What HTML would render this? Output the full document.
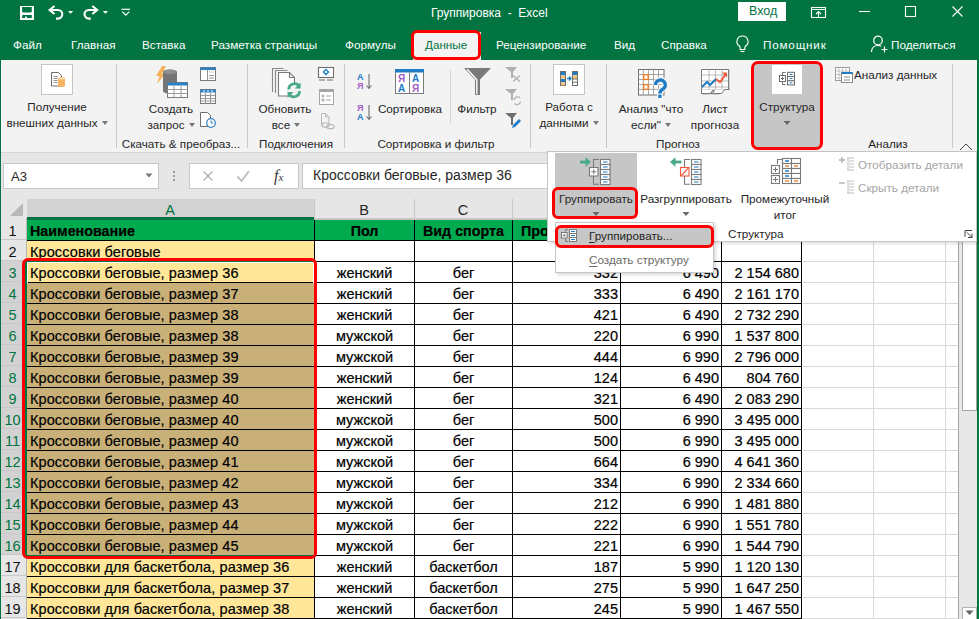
<!DOCTYPE html><html><head><meta charset="utf-8"><style>
*{box-sizing:border-box;margin:0;padding:0}
html,body{width:979px;height:619px;overflow:hidden;background:#fff;font-family:"Liberation Sans",sans-serif;}
.a{position:absolute}
.t{position:absolute;white-space:nowrap;line-height:1}
.rb{font-size:11.7px;color:#262626}
.c{font-size:14.5px;color:#000;line-height:20px;height:20px;white-space:nowrap;overflow:hidden;-webkit-text-stroke:0.2px #000}
</style></head><body>

<div class="a" style="left:0;top:0;width:979px;height:60px;background:#017441"></div>
<div class="t" style="left:431px;top:7px;font-size:12px;color:#fff">Группировка &nbsp;- &nbsp;Excel</div>
<div class="a" style="left:738px;top:2px;width:48px;height:19px;background:#fff"></div>
<div class="t" style="left:749px;top:5px;font-size:12.5px;color:#017441">Вход</div>
<div class="t" style="left:13px;top:39px;font-size:11.7px;color:#fff;">Файл</div>
<div class="t" style="left:71px;top:39px;font-size:11.7px;color:#fff;">Главная</div>
<div class="t" style="left:142px;top:39px;font-size:11.7px;color:#fff;">Вставка</div>
<div class="t" style="left:211px;top:39px;font-size:11.7px;color:#fff;">Разметка страницы</div>
<div class="t" style="left:345px;top:39px;font-size:11.7px;color:#fff;">Формулы</div>
<div class="t" style="left:496px;top:39px;font-size:11.7px;color:#fff;">Рецензирование</div>
<div class="t" style="left:614px;top:39px;font-size:11.7px;color:#fff;">Вид</div>
<div class="t" style="left:661px;top:39px;font-size:11.7px;color:#fff;">Справка</div>
<div class="t" style="left:763px;top:39px;font-size:11.7px;color:#fff;letter-spacing:0.8px;">Помощник</div>
<div class="t" style="left:891px;top:39px;font-size:11.7px;color:#fff;">Поделиться</div>
<div class="a" style="left:413px;top:32px;width:68px;height:28px;background:#f3f3f3"></div>
<div class="t" style="left:425px;top:39px;font-size:11.7px;color:#017441">Данные</div>
<div class="a" style="left:1px;top:60px;width:976px;height:92px;background:#f3f3f3"></div>
<div class="a" style="left:1px;top:152px;width:976px;height:1px;background:#d6d6d6"></div>
<div class="a" style="left:1px;top:153px;width:976px;height:66px;background:#e6e6e6"></div>
<div class="a" style="left:0;top:0;width:1px;height:619px;background:#017441"></div>
<div class="a" style="left:977px;top:0;width:2px;height:619px;background:#017441"></div>
<div class="a" style="left:1px;top:219px;width:957px;height:400px;background:#fff"></div>
<div class="a" style="left:1px;top:219px;width:25px;height:400px;background:#e6e6e6"></div>
<div class="a" style="left:1px;top:261px;width:25px;height:294px;background:#d2d2d2"></div>
<div class="a" style="left:26px;top:199px;width:932px;height:20px;background:#e6e6e6"></div>
<div class="a" style="left:27px;top:199px;width:287px;height:20px;background:#d2d2d2"></div>
<div class="a" style="left:27px;top:217px;width:287px;height:2px;background:#017441"></div>
<svg class="a" style="left:10px;top:203px" width="14" height="14"><polygon points="13,0 13,13 0,13" fill="#b8b8b8"/></svg>
<div class="a" style="left:314px;top:199px;width:1px;height:20px;background:#c8c8c8"></div>
<div class="a" style="left:414px;top:199px;width:1px;height:20px;background:#c8c8c8"></div>
<div class="a" style="left:512px;top:199px;width:1px;height:20px;background:#c8c8c8"></div>
<div class="a" style="left:620px;top:199px;width:1px;height:20px;background:#c8c8c8"></div>
<div class="a" style="left:721px;top:199px;width:1px;height:20px;background:#c8c8c8"></div>
<div class="a" style="left:801px;top:199px;width:1px;height:20px;background:#c8c8c8"></div>
<div class="a" style="left:873px;top:199px;width:1px;height:20px;background:#c8c8c8"></div>
<div class="a" style="left:945px;top:199px;width:1px;height:20px;background:#c8c8c8"></div>
<div class="a" style="left:958px;top:199px;width:1px;height:20px;background:#c8c8c8"></div>
<div class="a" style="left:26px;top:218px;width:932px;height:1px;background:#c8c8c8"></div>
<div class="a" style="left:27px;top:217px;width:287px;height:2px;background:#017441"></div>
<div class="t" style="left:150.0px;width:40px;text-align:center;top:203px;font-size:14.5px;color:#017441">A</div>
<div class="t" style="left:344.0px;width:40px;text-align:center;top:203px;font-size:14.5px;color:#262626">B</div>
<div class="t" style="left:443.0px;width:40px;text-align:center;top:203px;font-size:14.5px;color:#262626">C</div>
<div class="t" style="left:546.0px;width:40px;text-align:center;top:203px;font-size:14.5px;color:#262626">D</div>
<div class="t" style="left:650.5px;width:40px;text-align:center;top:203px;font-size:14.5px;color:#262626">E</div>
<div class="t" style="left:741.0px;width:40px;text-align:center;top:203px;font-size:14.5px;color:#262626">F</div>
<div class="t" style="left:817.0px;width:40px;text-align:center;top:203px;font-size:14.5px;color:#262626">G</div>
<div class="t" style="left:889.0px;width:40px;text-align:center;top:203px;font-size:14.5px;color:#262626">H</div>
<div class="t" style="left:931.5px;width:40px;text-align:center;top:203px;font-size:14.5px;color:#262626">I</div>
<div class="a" style="left:1px;top:239px;width:25px;height:1px;background:#c8c8c8"></div>
<div class="t" style="left:0px;width:25px;text-align:center;top:224px;font-size:14.5px;color:#111">1</div>
<div class="a" style="left:1px;top:260px;width:25px;height:1px;background:#c8c8c8"></div>
<div class="t" style="left:0px;width:25px;text-align:center;top:245px;font-size:14.5px;color:#111">2</div>
<div class="a" style="left:1px;top:281px;width:25px;height:1px;background:#c8c8c8"></div>
<div class="t" style="left:0px;width:25px;text-align:center;top:266px;font-size:14.5px;color:#017441">3</div>
<div class="a" style="left:1px;top:302px;width:25px;height:1px;background:#c8c8c8"></div>
<div class="t" style="left:0px;width:25px;text-align:center;top:287px;font-size:14.5px;color:#017441">4</div>
<div class="a" style="left:1px;top:323px;width:25px;height:1px;background:#c8c8c8"></div>
<div class="t" style="left:0px;width:25px;text-align:center;top:308px;font-size:14.5px;color:#017441">5</div>
<div class="a" style="left:1px;top:344px;width:25px;height:1px;background:#c8c8c8"></div>
<div class="t" style="left:0px;width:25px;text-align:center;top:329px;font-size:14.5px;color:#017441">6</div>
<div class="a" style="left:1px;top:365px;width:25px;height:1px;background:#c8c8c8"></div>
<div class="t" style="left:0px;width:25px;text-align:center;top:350px;font-size:14.5px;color:#017441">7</div>
<div class="a" style="left:1px;top:386px;width:25px;height:1px;background:#c8c8c8"></div>
<div class="t" style="left:0px;width:25px;text-align:center;top:371px;font-size:14.5px;color:#017441">8</div>
<div class="a" style="left:1px;top:407px;width:25px;height:1px;background:#c8c8c8"></div>
<div class="t" style="left:0px;width:25px;text-align:center;top:392px;font-size:14.5px;color:#017441">9</div>
<div class="a" style="left:1px;top:428px;width:25px;height:1px;background:#c8c8c8"></div>
<div class="t" style="left:0px;width:25px;text-align:center;top:413px;font-size:14.5px;color:#017441">10</div>
<div class="a" style="left:1px;top:449px;width:25px;height:1px;background:#c8c8c8"></div>
<div class="t" style="left:0px;width:25px;text-align:center;top:434px;font-size:14.5px;color:#017441">11</div>
<div class="a" style="left:1px;top:470px;width:25px;height:1px;background:#c8c8c8"></div>
<div class="t" style="left:0px;width:25px;text-align:center;top:455px;font-size:14.5px;color:#017441">12</div>
<div class="a" style="left:1px;top:491px;width:25px;height:1px;background:#c8c8c8"></div>
<div class="t" style="left:0px;width:25px;text-align:center;top:476px;font-size:14.5px;color:#017441">13</div>
<div class="a" style="left:1px;top:512px;width:25px;height:1px;background:#c8c8c8"></div>
<div class="t" style="left:0px;width:25px;text-align:center;top:497px;font-size:14.5px;color:#017441">14</div>
<div class="a" style="left:1px;top:533px;width:25px;height:1px;background:#c8c8c8"></div>
<div class="t" style="left:0px;width:25px;text-align:center;top:518px;font-size:14.5px;color:#017441">15</div>
<div class="a" style="left:1px;top:554px;width:25px;height:1px;background:#c8c8c8"></div>
<div class="t" style="left:0px;width:25px;text-align:center;top:539px;font-size:14.5px;color:#017441">16</div>
<div class="a" style="left:1px;top:575px;width:25px;height:1px;background:#c8c8c8"></div>
<div class="t" style="left:0px;width:25px;text-align:center;top:560px;font-size:14.5px;color:#111">17</div>
<div class="a" style="left:1px;top:596px;width:25px;height:1px;background:#c8c8c8"></div>
<div class="t" style="left:0px;width:25px;text-align:center;top:581px;font-size:14.5px;color:#111">18</div>
<div class="a" style="left:1px;top:617px;width:25px;height:1px;background:#c8c8c8"></div>
<div class="t" style="left:0px;width:25px;text-align:center;top:602px;font-size:14.5px;color:#111">19</div>
<div class="a" style="left:26px;top:219px;width:1px;height:400px;background:#c8c8c8"></div>
<div class="a" style="left:801px;top:240px;width:157px;height:1px;background:#d9d9d9"></div>
<div class="a" style="left:801px;top:261px;width:157px;height:1px;background:#d9d9d9"></div>
<div class="a" style="left:801px;top:282px;width:157px;height:1px;background:#d9d9d9"></div>
<div class="a" style="left:801px;top:303px;width:157px;height:1px;background:#d9d9d9"></div>
<div class="a" style="left:801px;top:324px;width:157px;height:1px;background:#d9d9d9"></div>
<div class="a" style="left:801px;top:345px;width:157px;height:1px;background:#d9d9d9"></div>
<div class="a" style="left:801px;top:366px;width:157px;height:1px;background:#d9d9d9"></div>
<div class="a" style="left:801px;top:387px;width:157px;height:1px;background:#d9d9d9"></div>
<div class="a" style="left:801px;top:408px;width:157px;height:1px;background:#d9d9d9"></div>
<div class="a" style="left:801px;top:429px;width:157px;height:1px;background:#d9d9d9"></div>
<div class="a" style="left:801px;top:450px;width:157px;height:1px;background:#d9d9d9"></div>
<div class="a" style="left:801px;top:471px;width:157px;height:1px;background:#d9d9d9"></div>
<div class="a" style="left:801px;top:492px;width:157px;height:1px;background:#d9d9d9"></div>
<div class="a" style="left:801px;top:513px;width:157px;height:1px;background:#d9d9d9"></div>
<div class="a" style="left:801px;top:534px;width:157px;height:1px;background:#d9d9d9"></div>
<div class="a" style="left:801px;top:555px;width:157px;height:1px;background:#d9d9d9"></div>
<div class="a" style="left:801px;top:576px;width:157px;height:1px;background:#d9d9d9"></div>
<div class="a" style="left:801px;top:597px;width:157px;height:1px;background:#d9d9d9"></div>
<div class="a" style="left:801px;top:618px;width:157px;height:1px;background:#d9d9d9"></div>
<div class="a" style="left:873px;top:219px;width:1px;height:400px;background:#d9d9d9"></div>
<div class="a" style="left:945px;top:219px;width:1px;height:400px;background:#d9d9d9"></div>
<div class="a" style="left:958px;top:199px;width:1px;height:420px;background:#a6a6a6"></div>
<div class="a" style="left:27px;top:219px;width:774px;height:21px;background:#00ab4f"></div>
<div class="a c" style="left:30px;top:221px;width:283px;font-weight:bold;font-size:14.3px">Наименование</div>
<div class="a c" style="left:315px;top:221px;width:99px;font-weight:bold;text-align:center;font-size:14.3px">Пол</div>
<div class="a c" style="left:415px;top:221px;width:97px;font-weight:bold;text-align:center;font-size:14.3px">Вид спорта</div>
<div class="a c" style="left:521px;top:221px;width:98px;font-weight:bold;font-size:14.3px">Продано, шт</div>
<div class="a c" style="left:621px;top:221px;width:100px;font-weight:bold;text-align:center;font-size:14.3px">Цена</div>
<div class="a c" style="left:722px;top:221px;width:79px;font-weight:bold;text-align:center;font-size:14.3px">Сумма</div>
<div class="a" style="left:27px;top:241px;width:287px;height:20px;background:#ffe699"></div>
<div class="a c" style="left:30px;top:242px;width:283px;letter-spacing:0.1px">Кроссовки беговые</div>
<div class="a" style="left:27px;top:262px;width:287px;height:20px;background:#ffe699"></div>
<div class="a c" style="left:30px;top:263px;width:283px;letter-spacing:0.1px">Кроссовки беговые, размер 36</div>
<div class="a c" style="left:315px;top:263px;width:99px;text-align:center">женский</div>
<div class="a c" style="left:415px;top:263px;width:97px;text-align:center">бег</div>
<div class="a c" style="left:513px;top:263px;width:105px;text-align:right">332</div>
<div class="a c" style="left:621px;top:263px;width:98px;text-align:right">6 490</div>
<div class="a c" style="left:722px;top:263px;width:77px;text-align:right">2 154 680</div>
<div class="a" style="left:27px;top:283px;width:287px;height:20px;background:#c9b079"></div>
<div class="a c" style="left:30px;top:284px;width:283px;letter-spacing:0.1px">Кроссовки беговые, размер 37</div>
<div class="a c" style="left:315px;top:284px;width:99px;text-align:center">женский</div>
<div class="a c" style="left:415px;top:284px;width:97px;text-align:center">бег</div>
<div class="a c" style="left:513px;top:284px;width:105px;text-align:right">333</div>
<div class="a c" style="left:621px;top:284px;width:98px;text-align:right">6 490</div>
<div class="a c" style="left:722px;top:284px;width:77px;text-align:right">2 161 170</div>
<div class="a" style="left:27px;top:304px;width:287px;height:20px;background:#c9b079"></div>
<div class="a c" style="left:30px;top:305px;width:283px;letter-spacing:0.1px">Кроссовки беговые, размер 38</div>
<div class="a c" style="left:315px;top:305px;width:99px;text-align:center">женский</div>
<div class="a c" style="left:415px;top:305px;width:97px;text-align:center">бег</div>
<div class="a c" style="left:513px;top:305px;width:105px;text-align:right">421</div>
<div class="a c" style="left:621px;top:305px;width:98px;text-align:right">6 490</div>
<div class="a c" style="left:722px;top:305px;width:77px;text-align:right">2 732 290</div>
<div class="a" style="left:27px;top:325px;width:287px;height:20px;background:#c9b079"></div>
<div class="a c" style="left:30px;top:326px;width:283px;letter-spacing:0.1px">Кроссовки беговые, размер 38</div>
<div class="a c" style="left:315px;top:326px;width:99px;text-align:center">мужской</div>
<div class="a c" style="left:415px;top:326px;width:97px;text-align:center">бег</div>
<div class="a c" style="left:513px;top:326px;width:105px;text-align:right">220</div>
<div class="a c" style="left:621px;top:326px;width:98px;text-align:right">6 990</div>
<div class="a c" style="left:722px;top:326px;width:77px;text-align:right">1 537 800</div>
<div class="a" style="left:27px;top:346px;width:287px;height:20px;background:#c9b079"></div>
<div class="a c" style="left:30px;top:347px;width:283px;letter-spacing:0.1px">Кроссовки беговые, размер 39</div>
<div class="a c" style="left:315px;top:347px;width:99px;text-align:center">мужской</div>
<div class="a c" style="left:415px;top:347px;width:97px;text-align:center">бег</div>
<div class="a c" style="left:513px;top:347px;width:105px;text-align:right">444</div>
<div class="a c" style="left:621px;top:347px;width:98px;text-align:right">6 990</div>
<div class="a c" style="left:722px;top:347px;width:77px;text-align:right">2 796 000</div>
<div class="a" style="left:27px;top:367px;width:287px;height:20px;background:#c9b079"></div>
<div class="a c" style="left:30px;top:368px;width:283px;letter-spacing:0.1px">Кроссовки беговые, размер 39</div>
<div class="a c" style="left:315px;top:368px;width:99px;text-align:center">женский</div>
<div class="a c" style="left:415px;top:368px;width:97px;text-align:center">бег</div>
<div class="a c" style="left:513px;top:368px;width:105px;text-align:right">124</div>
<div class="a c" style="left:621px;top:368px;width:98px;text-align:right">6 490</div>
<div class="a c" style="left:722px;top:368px;width:77px;text-align:right">804 760</div>
<div class="a" style="left:27px;top:388px;width:287px;height:20px;background:#c9b079"></div>
<div class="a c" style="left:30px;top:389px;width:283px;letter-spacing:0.1px">Кроссовки беговые, размер 40</div>
<div class="a c" style="left:315px;top:389px;width:99px;text-align:center">женский</div>
<div class="a c" style="left:415px;top:389px;width:97px;text-align:center">бег</div>
<div class="a c" style="left:513px;top:389px;width:105px;text-align:right">321</div>
<div class="a c" style="left:621px;top:389px;width:98px;text-align:right">6 490</div>
<div class="a c" style="left:722px;top:389px;width:77px;text-align:right">2 083 290</div>
<div class="a" style="left:27px;top:409px;width:287px;height:20px;background:#c9b079"></div>
<div class="a c" style="left:30px;top:410px;width:283px;letter-spacing:0.1px">Кроссовки беговые, размер 40</div>
<div class="a c" style="left:315px;top:410px;width:99px;text-align:center">мужской</div>
<div class="a c" style="left:415px;top:410px;width:97px;text-align:center">бег</div>
<div class="a c" style="left:513px;top:410px;width:105px;text-align:right">500</div>
<div class="a c" style="left:621px;top:410px;width:98px;text-align:right">6 990</div>
<div class="a c" style="left:722px;top:410px;width:77px;text-align:right">3 495 000</div>
<div class="a" style="left:27px;top:430px;width:287px;height:20px;background:#c9b079"></div>
<div class="a c" style="left:30px;top:431px;width:283px;letter-spacing:0.1px">Кроссовки беговые, размер 40</div>
<div class="a c" style="left:315px;top:431px;width:99px;text-align:center">мужской</div>
<div class="a c" style="left:415px;top:431px;width:97px;text-align:center">бег</div>
<div class="a c" style="left:513px;top:431px;width:105px;text-align:right">500</div>
<div class="a c" style="left:621px;top:431px;width:98px;text-align:right">6 990</div>
<div class="a c" style="left:722px;top:431px;width:77px;text-align:right">3 495 000</div>
<div class="a" style="left:27px;top:451px;width:287px;height:20px;background:#c9b079"></div>
<div class="a c" style="left:30px;top:452px;width:283px;letter-spacing:0.1px">Кроссовки беговые, размер 41</div>
<div class="a c" style="left:315px;top:452px;width:99px;text-align:center">мужской</div>
<div class="a c" style="left:415px;top:452px;width:97px;text-align:center">бег</div>
<div class="a c" style="left:513px;top:452px;width:105px;text-align:right">664</div>
<div class="a c" style="left:621px;top:452px;width:98px;text-align:right">6 990</div>
<div class="a c" style="left:722px;top:452px;width:77px;text-align:right">4 641 360</div>
<div class="a" style="left:27px;top:472px;width:287px;height:20px;background:#c9b079"></div>
<div class="a c" style="left:30px;top:473px;width:283px;letter-spacing:0.1px">Кроссовки беговые, размер 42</div>
<div class="a c" style="left:315px;top:473px;width:99px;text-align:center">мужской</div>
<div class="a c" style="left:415px;top:473px;width:97px;text-align:center">бег</div>
<div class="a c" style="left:513px;top:473px;width:105px;text-align:right">334</div>
<div class="a c" style="left:621px;top:473px;width:98px;text-align:right">6 990</div>
<div class="a c" style="left:722px;top:473px;width:77px;text-align:right">2 334 660</div>
<div class="a" style="left:27px;top:493px;width:287px;height:20px;background:#c9b079"></div>
<div class="a c" style="left:30px;top:494px;width:283px;letter-spacing:0.1px">Кроссовки беговые, размер 43</div>
<div class="a c" style="left:315px;top:494px;width:99px;text-align:center">мужской</div>
<div class="a c" style="left:415px;top:494px;width:97px;text-align:center">бег</div>
<div class="a c" style="left:513px;top:494px;width:105px;text-align:right">212</div>
<div class="a c" style="left:621px;top:494px;width:98px;text-align:right">6 990</div>
<div class="a c" style="left:722px;top:494px;width:77px;text-align:right">1 481 880</div>
<div class="a" style="left:27px;top:514px;width:287px;height:20px;background:#c9b079"></div>
<div class="a c" style="left:30px;top:515px;width:283px;letter-spacing:0.1px">Кроссовки беговые, размер 44</div>
<div class="a c" style="left:315px;top:515px;width:99px;text-align:center">мужской</div>
<div class="a c" style="left:415px;top:515px;width:97px;text-align:center">бег</div>
<div class="a c" style="left:513px;top:515px;width:105px;text-align:right">222</div>
<div class="a c" style="left:621px;top:515px;width:98px;text-align:right">6 990</div>
<div class="a c" style="left:722px;top:515px;width:77px;text-align:right">1 551 780</div>
<div class="a" style="left:27px;top:535px;width:287px;height:20px;background:#c9b079"></div>
<div class="a c" style="left:30px;top:536px;width:283px;letter-spacing:0.1px">Кроссовки беговые, размер 45</div>
<div class="a c" style="left:315px;top:536px;width:99px;text-align:center">мужской</div>
<div class="a c" style="left:415px;top:536px;width:97px;text-align:center">бег</div>
<div class="a c" style="left:513px;top:536px;width:105px;text-align:right">221</div>
<div class="a c" style="left:621px;top:536px;width:98px;text-align:right">6 990</div>
<div class="a c" style="left:722px;top:536px;width:77px;text-align:right">1 544 790</div>
<div class="a" style="left:27px;top:556px;width:287px;height:20px;background:#ffe699"></div>
<div class="a c" style="left:30px;top:557px;width:283px;letter-spacing:0.1px">Кроссовки для баскетбола, размер 36</div>
<div class="a c" style="left:315px;top:557px;width:99px;text-align:center">женский</div>
<div class="a c" style="left:415px;top:557px;width:97px;text-align:center">баскетбол</div>
<div class="a c" style="left:513px;top:557px;width:105px;text-align:right">187</div>
<div class="a c" style="left:621px;top:557px;width:98px;text-align:right">5 990</div>
<div class="a c" style="left:722px;top:557px;width:77px;text-align:right">1 120 130</div>
<div class="a" style="left:27px;top:577px;width:287px;height:20px;background:#ffe699"></div>
<div class="a c" style="left:30px;top:578px;width:283px;letter-spacing:0.1px">Кроссовки для баскетбола, размер 37</div>
<div class="a c" style="left:315px;top:578px;width:99px;text-align:center">женский</div>
<div class="a c" style="left:415px;top:578px;width:97px;text-align:center">баскетбол</div>
<div class="a c" style="left:513px;top:578px;width:105px;text-align:right">275</div>
<div class="a c" style="left:621px;top:578px;width:98px;text-align:right">5 990</div>
<div class="a c" style="left:722px;top:578px;width:77px;text-align:right">1 647 250</div>
<div class="a" style="left:27px;top:598px;width:287px;height:20px;background:#ffe699"></div>
<div class="a c" style="left:30px;top:599px;width:283px;letter-spacing:0.1px">Кроссовки для баскетбола, размер 38</div>
<div class="a c" style="left:315px;top:599px;width:99px;text-align:center">женский</div>
<div class="a c" style="left:415px;top:599px;width:97px;text-align:center">баскетбол</div>
<div class="a c" style="left:513px;top:599px;width:105px;text-align:right">245</div>
<div class="a c" style="left:621px;top:599px;width:98px;text-align:right">5 990</div>
<div class="a c" style="left:722px;top:599px;width:77px;text-align:right">1 467 550</div>
<div class="a" style="left:27px;top:240px;width:775px;height:1px;background:#000"></div>
<div class="a" style="left:27px;top:261px;width:775px;height:1px;background:#000"></div>
<div class="a" style="left:27px;top:282px;width:775px;height:1px;background:#000"></div>
<div class="a" style="left:27px;top:303px;width:775px;height:1px;background:#000"></div>
<div class="a" style="left:27px;top:324px;width:775px;height:1px;background:#000"></div>
<div class="a" style="left:27px;top:345px;width:775px;height:1px;background:#000"></div>
<div class="a" style="left:27px;top:366px;width:775px;height:1px;background:#000"></div>
<div class="a" style="left:27px;top:387px;width:775px;height:1px;background:#000"></div>
<div class="a" style="left:27px;top:408px;width:775px;height:1px;background:#000"></div>
<div class="a" style="left:27px;top:429px;width:775px;height:1px;background:#000"></div>
<div class="a" style="left:27px;top:450px;width:775px;height:1px;background:#000"></div>
<div class="a" style="left:27px;top:471px;width:775px;height:1px;background:#000"></div>
<div class="a" style="left:27px;top:492px;width:775px;height:1px;background:#000"></div>
<div class="a" style="left:27px;top:513px;width:775px;height:1px;background:#000"></div>
<div class="a" style="left:27px;top:534px;width:775px;height:1px;background:#000"></div>
<div class="a" style="left:27px;top:555px;width:775px;height:1px;background:#000"></div>
<div class="a" style="left:27px;top:576px;width:775px;height:1px;background:#000"></div>
<div class="a" style="left:27px;top:597px;width:775px;height:1px;background:#000"></div>
<div class="a" style="left:27px;top:618px;width:775px;height:1px;background:#000"></div>
<div class="a" style="left:26px;top:219px;width:932px;height:1px;background:#c4c0c0"></div>
<div class="a" style="left:27px;top:218px;width:287px;height:2px;background:#017441"></div>
<div class="a" style="left:26px;top:219px;width:1px;height:400px;background:#b4b4b4"></div>
<div class="a" style="left:314px;top:220px;width:1px;height:399px;background:#000"></div>
<div class="a" style="left:414px;top:220px;width:1px;height:399px;background:#000"></div>
<div class="a" style="left:512px;top:220px;width:1px;height:399px;background:#000"></div>
<div class="a" style="left:620px;top:220px;width:1px;height:399px;background:#000"></div>
<div class="a" style="left:721px;top:220px;width:1px;height:399px;background:#000"></div>
<div class="a" style="left:801px;top:220px;width:1px;height:399px;background:#000"></div>
<div class="a" style="left:25px;top:260px;width:291px;height:297px;border:2px solid #017441"></div>
<div class="a" style="left:27px;top:262px;width:287px;height:21px;border:1px solid #fff;border-bottom:none"></div>
<div class="a" style="left:22px;top:258px;width:295px;height:301px;border:3px solid #ff0000;border-radius:6px"></div>
<div class="a" style="left:959px;top:199px;width:18px;height:420px;background:#e8e8e8"></div>
<div class="a" style="left:962px;top:231px;width:15px;height:180px;background:#fff;border:1px solid #a6a6a6"></div>
<div class="a" style="left:962px;top:607px;width:15px;height:12px;background:#fff;border:1px solid #b4b4b4;border-bottom:none"></div>
<svg class="a" style="left:964px;top:609px" width="12" height="8"><polygon points="1.5,1.5 9.5,1.5 5.5,6" fill="#666"/></svg>
<div class="a" style="left:3px;top:163px;width:156px;height:26px;background:#fff;border:1px solid #c6c6c6"></div>
<div class="t" style="left:11px;top:170px;font-size:13px;color:#262626">A3</div>
<svg class="a" style="left:145px;top:173px" width="9" height="6"><polygon points="0.5,0.5 7.5,0.5 4,4.5" fill="#777"/></svg>
<svg class="a" style="left:172px;top:170px" width="5" height="12"><rect x="1" y="1" width="2" height="2" fill="#9a9a9a"/><rect x="1" y="5" width="2" height="2" fill="#9a9a9a"/><rect x="1" y="9" width="2" height="2" fill="#9a9a9a"/></svg>
<div class="a" style="left:189px;top:163px;width:110px;height:26px;background:#fff;border:1px solid #c6c6c6"></div>
<svg class="a" style="left:202px;top:170px" width="13" height="13"><path d="M1.5 1.5l9 9M10.5 1.5l-9 9" stroke="#b0b0b0" stroke-width="1.3"/></svg>
<svg class="a" style="left:236px;top:169px" width="15" height="14"><path d="M1.5 7.5l4 4.5L13 2" fill="none" stroke="#c0c0c0" stroke-width="2"/></svg>
<div class="t" style="left:274px;top:168px;font-size:16px;color:#3a3a3a;font-family:'Liberation Serif',serif;font-style:italic">f<span style="font-size:11px">x</span></div>
<div class="a" style="left:302px;top:163px;width:660px;height:26px;background:#fff;border:1px solid #c6c6c6"></div>
<div class="t" style="left:313px;top:168px;font-size:14px;color:#262626">Кроссовки беговые, размер 36</div>
<svg class="a" style="left:0px;top:0px" width="140" height="28" viewBox="0 0 140 28"><rect x="20" y="6" width="14" height="14" fill="#fff"/><path d="M22.1 7.1h9.7v4.4l-1 1.1h-7.7l-1-1.1z" fill="#017441"/><rect x="22.2" y="15" width="9.6" height="3.1" fill="#017441"/><rect x="25" y="16.6" width="2" height="1.6" fill="#fff"/><path d="M49.5 10H58A4.3 4.3 0 0 1 58 18.6H56" fill="none" stroke="#fff" stroke-width="2.1"/><path d="M54.5 6L49.6 10L54.5 14" fill="none" stroke="#fff" stroke-width="2.1"/><path d="M68 11h5.2l-2.6 2.8z" fill="#fff"/><path d="M97.3 10H88.8A4.3 4.3 0 0 0 88.8 18.6H90.8" fill="none" stroke="#fff" stroke-width="2.1"/><path d="M92.3 6L97.2 10L92.3 14" fill="none" stroke="#fff" stroke-width="2.1"/><path d="M102.8 11h5.2l-2.6 2.8z" fill="#fff"/><path d="M121.5 9.3h8.5" stroke="#fff" stroke-width="1.2"/><path d="M122.3 11.6l3.5 3.6 3.5-3.6" fill="none" stroke="#fff" stroke-width="1.2"/></svg>
<svg class="a" style="left:810px;top:5px" width="18" height="14" viewBox="0 0 18 14"><rect x="1.5" y="2.5" width="14" height="10" fill="none" stroke="#fff" stroke-width="1.1"/><path d="M1.5 4.5h14" stroke="#fff" stroke-width="1"/><path d="M8.5 12V6.5M6 9l2.5-2.5L11 9" fill="none" stroke="#fff" stroke-width="1.1"/></svg>
<svg class="a" style="left:858px;top:5px" width="14" height="14" viewBox="0 0 14 14"><path d="M1 6.5h11" stroke="#fff" stroke-width="1.1"/></svg>
<svg class="a" style="left:904px;top:5px" width="14" height="14" viewBox="0 0 14 14"><rect x="1.5" y="1.5" width="10" height="10" fill="none" stroke="#fff" stroke-width="1.1"/></svg>
<svg class="a" style="left:951px;top:5px" width="14" height="14" viewBox="0 0 14 14"><path d="M1.5 1.5l10 10M11.5 1.5l-10 10" stroke="#fff" stroke-width="1.1"/></svg>
<svg class="a" style="left:734px;top:34px" width="18" height="20" viewBox="0 0 18 20"><path d="M8.5 2a5.5 5.5 0 0 0-3.2 10c.6.5.9 1.2.9 2v1.5h4.6V14c0-.8.3-1.5.9-2A5.5 5.5 0 0 0 8.5 2z" fill="none" stroke="#fff" stroke-width="1.1"/><path d="M6.5 17.5h4" stroke="#fff" stroke-width="1.1"/></svg>
<svg class="a" style="left:870px;top:34px" width="20" height="20" viewBox="0 0 20 20"><circle cx="8" cy="6.5" r="4.3" fill="none" stroke="#fff" stroke-width="1.2"/><path d="M1.5 18c0-4 2.7-6.5 6.5-6.5 1.3 0 2.4.3 3.3.8" fill="none" stroke="#fff" stroke-width="1.2"/><path d="M14.5 12.5v6M11.5 15.5h6" stroke="#fff" stroke-width="1.2"/></svg>
<div class="a" style="left:116px;top:64px;width:1px;height:84px;background:#c8c8c8"></div>
<div class="a" style="left:247px;top:64px;width:1px;height:84px;background:#c8c8c8"></div>
<div class="a" style="left:344px;top:64px;width:1px;height:84px;background:#c8c8c8"></div>
<div class="a" style="left:530px;top:64px;width:1px;height:84px;background:#c8c8c8"></div>
<div class="a" style="left:952px;top:64px;width:1px;height:84px;background:#c8c8c8"></div>
<div class="a" style="left:450px;top:70px;width:1px;height:54px;background:#d4d4d4"></div>
<div class="a" style="left:606px;top:64px;width:1px;height:84px;background:#c8c8c8"></div>
<div class="a" style="left:41px;top:64px;width:32px;height:31px;background:#fff;border:1px solid #c6c6c6"></div>
<svg class="a" style="left:49px;top:70px" width="20" height="20" viewBox="0 0 20 20"><path d="M2.5 2.5h7l3 3v10.5h-10z" fill="#fff" stroke="#6d6d6d" stroke-width="1"/><path d="M4.5 6.5h4M4.5 8.5h4M4.5 10.5h4M4.5 12.5h4" stroke="#8a8a8a" stroke-width="0.9"/><path d="M9 8.5c0-1 1.6-1.6 3.5-1.6s3.5.6 3.5 1.6v7c0 1-1.6 1.6-3.5 1.6S9 16.5 9 15.5z" fill="#f5b562"/><ellipse cx="12.5" cy="8.5" rx="3.2" ry="1" fill="#fde0b8"/></svg>
<div class="t" style="left:-23.0px;width:160px;text-align:center;top:101px;font-size:11.7px;color:#262626;">Получение</div>
<div class="t" style="left:-13.0px;width:140px;text-align:center;top:117px;font-size:11.7px;color:#262626;">внешних данных<span style="display:inline-block;width:0;height:0;border-left:3.5px solid transparent;border-right:3.5px solid transparent;border-top:4px solid #777;vertical-align:middle;margin-left:4px;margin-top:-2px"></span></div>
<svg class="a" style="left:154px;top:65px" width="36" height="34" viewBox="0 0 36 34"><path d="M8 1h4L8 9h3L3 19l2.5-8H2z" fill="#f5b25a"/><path d="M9 7c0-1.5 3-2.6 7-2.6s7 1.1 7 2.6v19c0 1.5-3 2.6-7 2.6S9 27.5 9 26z" fill="#757575"/><ellipse cx="16" cy="7" rx="7" ry="2.2" fill="#8f8f8f"/><rect x="13.5" y="17.5" width="20" height="15" fill="#fff" stroke="#7a7a7a" stroke-width="1"/><rect x="13.5" y="17.5" width="20" height="3" fill="#2e7fc1"/><path d="M13.5 24.5h20M13.5 28.5h20M20 20.5v12M27 20.5v12" stroke="#9a9a9a" stroke-width="1"/></svg>
<div class="t" style="left:91.0px;width:160px;text-align:center;top:103px;font-size:11.7px;color:#262626;">Создать</div>
<div class="t" style="left:91.0px;width:160px;text-align:center;top:119px;font-size:11.7px;color:#262626;">запрос<span style="display:inline-block;width:0;height:0;border-left:3.5px solid transparent;border-right:3.5px solid transparent;border-top:4px solid #777;vertical-align:middle;margin-left:4px;margin-top:-2px"></span></div>
<svg class="a" style="left:199px;top:66px" width="18" height="16" viewBox="0 0 18 16"><rect x="1.5" y="1.5" width="15" height="13" fill="#fff" stroke="#7a7a7a"/><rect x="1.5" y="1.5" width="15" height="2.5" fill="#2e7fc1"/><path d="M8.5 4v10.5M10 9.5h5M10 12h5" stroke="#8a8a8a" stroke-width="0.9"/><path d="M10 6h1M12 6h1M14 6h1" stroke="#999" stroke-width="0.9"/></svg>
<svg class="a" style="left:199px;top:88px" width="18" height="17" viewBox="0 0 18 17"><rect x="1.5" y="1.5" width="15" height="14" fill="#fff" stroke="#7a7a7a"/><rect x="1.5" y="1.5" width="15" height="3" fill="#2e7fc1"/><path d="M4 3h2M8 3h2M12 3h2" stroke="#fff" stroke-width="1"/><path d="M1.5 7.5h15M1.5 10.5h15M1.5 13h15M6.5 4.5v11M11.5 4.5v11" stroke="#8f8f8f" stroke-width="0.9"/></svg>
<svg class="a" style="left:199px;top:111px" width="18" height="17" viewBox="0 0 18 17"><path d="M1.5 1.5h7l3 3v11h-10z" fill="#fff" stroke="#6d6d6d"/><circle cx="12" cy="12" r="4.3" fill="#fff" stroke="#2e7fc1" stroke-width="1.2"/><path d="M12 9.5V12h2" fill="none" stroke="#2e7fc1" stroke-width="1"/></svg>
<div class="t" style="left:101.0px;width:160px;text-align:center;top:138px;font-size:11.7px;color:#262626;">Скачать &amp; преобраз...</div>
<svg class="a" style="left:265px;top:62px" width="40" height="40" viewBox="0 0 40 40"><path d="M7.5 30V6.5h11" fill="none" stroke="#8a8a8a" stroke-width="1.1"/><path d="M10.5 31V8.5h12" fill="none" stroke="#8a8a8a" stroke-width="1.1"/><path d="M13.5 10.5h11l5 5V34h-16z" fill="#fff" stroke="#7a7a7a" stroke-width="1.1"/><path d="M24.5 10.5v5h5" fill="none" stroke="#7a7a7a" stroke-width="1.1"/><circle cx="29.2" cy="29" r="7.8" fill="#f3f3f3"/><g fill="none" stroke="#4aa98c" stroke-width="2.8"><path d="M23.8 27.5a5.6 5.6 0 0 1 10.3-3.2"/><path d="M34.5 29a5.6 5.6 0 0 1-10.3 3.2"/></g><path d="M35.6 20.6v6h-6z" fill="#4aa98c"/><path d="M22.6 36v-6h6z" fill="#4aa98c"/></svg>
<div class="t" style="left:205.0px;width:160px;text-align:center;top:103px;font-size:11.7px;color:#262626;">Обновить</div>
<div class="t" style="left:206.0px;width:160px;text-align:center;top:119px;font-size:11.7px;color:#262626;">все<span style="display:inline-block;width:0;height:0;border-left:3.5px solid transparent;border-right:3.5px solid transparent;border-top:4px solid #777;vertical-align:middle;margin-left:4px;margin-top:-2px"></span></div>
<svg class="a" style="left:317px;top:66px" width="18" height="16" viewBox="0 0 18 16"><rect x="1.5" y="1.5" width="15" height="10" fill="#fff" stroke="#6d6d6d" stroke-width="1.1"/><path d="M2 14h6M10 14h6" stroke="#6d6d6d" stroke-width="1.2"/><path d="M9 3.5l2.5 2.5L9 8.5 6.5 6z" fill="none" stroke="#1f7cc4" stroke-width="1.4"/></svg>
<svg class="a" style="left:318px;top:88px" width="17" height="18" viewBox="0 0 17 18"><rect x="1.5" y="1.5" width="14" height="15" fill="#fff" stroke="#a6a6a6"/><rect x="1.5" y="1.5" width="14" height="2.5" fill="#a6a6a6"/><circle cx="5" cy="8" r="1.3" fill="#a6a6a6"/><circle cx="5" cy="12" r="1.3" fill="none" stroke="#a6a6a6"/><path d="M8 8h5M8 12h5" stroke="#a6a6a6"/></svg>
<svg class="a" style="left:319px;top:112px" width="17" height="18" viewBox="0 0 17 18"><path d="M10 13.5V5l-3.5-3.5H2.5v12" fill="none" stroke="#b8b8b8"/><path d="M6.5 1.5V5h3.5" fill="none" stroke="#b8b8b8"/><rect x="3" y="11" width="7" height="4.2" rx="2.1" fill="#f3f3f3" stroke="#b8b8b8" stroke-width="1.2"/><rect x="8" y="12.5" width="7" height="4.2" rx="2.1" fill="none" stroke="#b8b8b8" stroke-width="1.2"/></svg>
<div class="t" style="left:216.0px;width:160px;text-align:center;top:138px;font-size:11.7px;color:#262626;">Подключения</div>
<svg class="a" style="left:356px;top:72px" width="18" height="19" viewBox="0 0 18 19"><text x="1" y="8" font-family="Liberation Sans" font-weight="bold" font-size="9" fill="#1f7cc4">A</text><text x="1" y="16.5" font-family="Liberation Sans" font-weight="bold" font-size="9" fill="#a15fc6">Я</text><path d="M13 2v14M10.5 13.5L13 16.5l2.5-3" fill="none" stroke="#6d6d6d" stroke-width="1.1"/></svg>
<svg class="a" style="left:356px;top:103px" width="18" height="19" viewBox="0 0 18 19"><text x="1" y="8" font-family="Liberation Sans" font-weight="bold" font-size="9" fill="#a15fc6">Я</text><text x="1" y="16.5" font-family="Liberation Sans" font-weight="bold" font-size="9" fill="#1f7cc4">A</text><path d="M13 2v14M10.5 13.5L13 16.5l2.5-3" fill="none" stroke="#6d6d6d" stroke-width="1.1"/></svg>
<svg class="a" style="left:394px;top:68px" width="31" height="27" viewBox="0 0 31 27"><rect x="1.5" y="1.5" width="28" height="24" fill="#fff" stroke="#7a7a7a"/><rect x="1" y="1" width="29" height="3.5" fill="#1f7cc4"/><path d="M15.5 4.5v21" stroke="#7a7a7a"/><text x="4" y="14" font-family="Liberation Sans" font-size="10" font-weight="bold" fill="#a15fc6">Я</text><text x="4" y="24" font-family="Liberation Sans" font-size="10" font-weight="bold" fill="#1f7cc4">A</text><text x="18" y="14" font-family="Liberation Sans" font-size="10" font-weight="bold" fill="#1f7cc4">A</text><text x="18" y="24" font-family="Liberation Sans" font-size="10" font-weight="bold" fill="#a15fc6">Я</text></svg>
<div class="t" style="left:330.0px;width:160px;text-align:center;top:103px;font-size:11.7px;color:#262626;">Сортировка</div>
<svg class="a" style="left:463px;top:67px" width="29" height="29" viewBox="0 0 29 29"><path d="M1 1h27L17 12.5V28h-5V12.5z" fill="#7a7a7a"/><path d="M4.2 2.3l9.6 10.5v14.5" fill="none" stroke="#fff" stroke-width="1.4"/></svg>
<div class="t" style="left:397.0px;width:160px;text-align:center;top:103px;font-size:11.7px;color:#262626;">Фильтр</div>
<svg class="a" style="left:504px;top:66px" width="18" height="17" viewBox="0 0 18 17"><path d="M1 1h12L9 6v6H7V6z" fill="#b0b0b0"/><path d="M9 9.5l7 6M16 9.5l-7 6" stroke="#b0b0b0" stroke-width="1.2"/></svg>
<svg class="a" style="left:504px;top:88px" width="18" height="18" viewBox="0 0 18 18"><path d="M1 1h12L9 6v6H7V6z" fill="#b0b0b0"/><path d="M10 12a3.5 3.5 0 0 1 6-2M16.5 13.5a3.5 3.5 0 0 1-6 2" fill="none" stroke="#b0b0b0" stroke-width="1.3"/></svg>
<svg class="a" style="left:504px;top:112px" width="18" height="17" viewBox="0 0 18 17"><path d="M1 1h12L9 6v7H7V6z" fill="#6d6d6d"/><path d="M8 16l1-3 6-6 2 2-6 6z" fill="#1f7cc4"/></svg>
<div class="t" style="left:356.0px;width:160px;text-align:center;top:138px;font-size:11.7px;color:#262626;">Сортировка и фильтр</div>
<div class="a" style="left:553px;top:64px;width:32px;height:31px;background:#fff;border:1px solid #c6c6c6"></div>
<svg class="a" style="left:559px;top:70px" width="20" height="18" viewBox="0 0 20 18"><rect x="1.5" y="1.5" width="5" height="14" fill="#fff" stroke="#6d6d6d"/><rect x="2" y="2" width="4" height="3.2" fill="#1f7cc4"/><rect x="2" y="5.5" width="4" height="3.2" fill="#f5c27a"/><rect x="2" y="9" width="4" height="3.2" fill="#1f7cc4"/><rect x="2" y="12.3" width="4" height="3" fill="#f5c27a"/><rect x="13.5" y="1.5" width="5" height="14" fill="#fff" stroke="#6d6d6d"/><rect x="14" y="2" width="4" height="3.2" fill="#1f7cc4"/><rect x="14" y="5.5" width="4" height="3.2" fill="#f5c27a"/><path d="M14 9h4M14 12.2h4" stroke="#6d6d6d"/><path d="M8 8.5h3.5M10 6.5l2 2-2 2" fill="none" stroke="#1f7cc4" stroke-width="1.3"/></svg>
<div class="t" style="left:489.0px;width:160px;text-align:center;top:101px;font-size:11.7px;color:#262626;">Работа с</div>
<div class="t" style="left:489.0px;width:160px;text-align:center;top:117px;font-size:11.7px;color:#262626;">данными<span style="display:inline-block;width:0;height:0;border-left:3.5px solid transparent;border-right:3.5px solid transparent;border-top:4px solid #777;vertical-align:middle;margin-left:4px;margin-top:-2px"></span></div>
<svg class="a" style="left:630px;top:60px" width="110" height="45" viewBox="0 0 110 45"><rect x="8.5" y="9.5" width="25.5" height="25.5" fill="#fff" stroke="#707070" stroke-width="1"/><path d="M13.3 9.5v25.5M18.6 9.5v25.5M23.5 9.5v25.5M28.5 9.5v25.5M8.5 14.5h25.5M8.5 19.5h25.5M8.5 24.4h25.5M8.5 29.4h25.5" stroke="#9a9a9a" stroke-width="0.9"/><rect x="13.6" y="14.8" width="4.6" height="4.6" fill="#fff" stroke="#f47b20" stroke-width="1.3"/><rect x="13.6" y="24.7" width="4.6" height="4.6" fill="#fff" stroke="#f47b20" stroke-width="1.3"/><path d="M25.5 25A4.9 4.9 0 1 1 32.7 29.2Q30 30.5 30 33.5" fill="none" stroke="#f3f3f3" stroke-width="6"/><rect x="27" y="33" width="6" height="6" fill="#f3f3f3"/><path d="M25.5 25A4.9 4.9 0 1 1 32.7 29.2Q30 30.5 30 33.5" fill="none" stroke="#1f7cc4" stroke-width="3.4"/><rect x="28.2" y="34.6" width="3.4" height="3.3" fill="#1f7cc4"/></svg>
<svg class="a" style="left:698px;top:66px" width="34" height="32" viewBox="0 0 34 32"><rect x="3.9" y="3.9" width="26.8" height="19.6" fill="#fff" stroke="#707070" stroke-width="1.1"/><path d="M10.6 3.9v19.6M18.6 3.9v19.6M25.6 3.9v19.6M3.9 8.3h26.8M3.9 13.3h26.8M3.9 18.3h26.8" stroke="#a0a0a0" stroke-width="0.9"/><path d="M3.9 23.5v3.5a.8 .8 0 0 0 .8.8h7.5l3-3.8M13.5 23.5v3.5a.8.8 0 0 0 .8.8h6.5l3.5-4.3" fill="none" stroke="#707070" stroke-width="1.1"/><path d="M4.3 22.5l3.6-5 3 3.5 4.5-5" fill="none" stroke="#1f7cc4" stroke-width="2.3" stroke-linejoin="round"/><path d="M15.3 16l3.2-3.6 1.6 3.6 7.3-9" fill="none" stroke="#f05a3c" stroke-width="2.3" stroke-linejoin="round"/><path d="M22 5.6h7.2v7.2z" fill="#f05a3c"/></svg>
<div class="t" style="left:571.0px;width:160px;text-align:center;top:103px;font-size:11.7px;color:#262626;">Анализ "что</div>
<div class="t" style="left:571.0px;width:160px;text-align:center;top:119px;font-size:11.7px;color:#262626;">если"<span style="display:inline-block;width:0;height:0;border-left:3.5px solid transparent;border-right:3.5px solid transparent;border-top:4px solid #777;vertical-align:middle;margin-left:4px;margin-top:-2px"></span></div>
<svg class="a" style="left:700px;top:68px" width="30" height="28" viewBox="0 0 30 28"><path d="M1.5 21.5v-20h27v20" fill="#fff" stroke="#7a7a7a"/><path d="M1.5 7h27M1.5 13h27M1.5 19h27M9 1.5v20M15.5 1.5v20M22 1.5v20" stroke="#a8a8a8" stroke-width="0.8"/><path d="M1.5 21.5v4h9l2-3h2l-2 3h9l3-4h5" fill="#fff" stroke="#7a7a7a"/><path d="M2 19l5-5 3 3 6-6" fill="none" stroke="#1f7cc4" stroke-width="2"/><path d="M16 11l4 3 6-8" fill="none" stroke="#f05a3c" stroke-width="2"/><path d="M22 4.5h5v5z" fill="#f05a3c"/></svg>
<div class="t" style="left:635.0px;width:160px;text-align:center;top:103px;font-size:11.7px;color:#262626;">Лист</div>
<div class="t" style="left:635.0px;width:160px;text-align:center;top:119px;font-size:11.7px;color:#262626;">прогноза</div>
<div class="t" style="left:598.0px;width:160px;text-align:center;top:138px;font-size:11.7px;color:#262626;">Прогноз</div>
<div class="a" style="left:754px;top:63px;width:67px;height:85px;background:#c6c6c6"></div>
<div class="a" style="left:772px;top:65px;width:30px;height:29px;background:#fff"></div>
<svg class="a" style="left:776px;top:69px" width="22" height="20" viewBox="0 0 22 20"><path d="M6.5 6.5V3.5h3M6.5 12.5v3h3" fill="none" stroke="#6d6d6d"/><rect x="3.5" y="6.5" width="6" height="6" fill="#fff" stroke="#6d6d6d"/><path d="M6.5 8v3M5 9.5h3" stroke="#6d6d6d"/><g fill="#fff" stroke="#6d6d6d"><rect x="11.5" y="3.3" width="7" height="4.2"/><rect x="11.5" y="7.5" width="7" height="4.2"/><rect x="11.5" y="11.7" width="7" height="4.2"/></g><path d="M13.5 5.4h3M13.5 9.6h3M13.5 13.8h3" stroke="#1f7cc4" stroke-width="1"/></svg>
<div class="t" style="left:707.0px;width:160px;text-align:center;top:101px;font-size:11.7px;color:#262626;">Структура</div>
<svg class="a" style="left:783px;top:120px" width="8" height="6" viewBox="0 0 8 6"><path d="M0.5 1h7L4 5z" fill="#666"/></svg>
<div class="a" style="left:751px;top:61px;width:72px;height:89px;border:3px solid #ff0000;border-radius:7px"></div>
<svg class="a" style="left:834px;top:66px" width="20" height="18" viewBox="0 0 20 18"><rect x="1.5" y="1.5" width="14" height="13" fill="#fff" stroke="#9a9a9a"/><path d="M1.5 5h14M1.5 8.5h14M1.5 12h14M5 1.5v13M8.5 1.5v13M12 1.5v13" stroke="#b5b5b5" stroke-width="0.8"/><rect x="7.5" y="6.5" width="11" height="10" fill="#fff" stroke="#8a8a8a"/><rect x="7.5" y="6" width="11" height="2" fill="#1f7cc4"/><path d="M10 11h6M10 14h6" stroke="#8a8a8a"/></svg>
<div class="t" style="left:854px;top:69px;font-size:11.7px;color:#262626;">Анализ данных</div>
<div class="t" style="left:808.0px;width:160px;text-align:center;top:138px;font-size:11.7px;color:#262626;">Анализ</div>
<svg class="a" style="left:959px;top:142px" width="14" height="10" viewBox="0 0 14 10"><path d="M1 8l6-6 6 6" fill="none" stroke="#444" stroke-width="1"/></svg>
<div class="a" style="left:411px;top:30px;width:70px;height:30px;border:3px solid #ff0000;border-radius:6px"></div>
<div class="a" style="left:547px;top:151px;width:430px;height:91px;background:#fff;border:1px solid #c6c6c6;box-shadow:2px 2px 3px rgba(0,0,0,0.12)"></div>
<div class="a" style="left:555px;top:153px;width:82px;height:65px;background:#c6c6c6"></div>
<svg class="a" style="left:578px;top:156px" width="34" height="32" viewBox="0 0 34 32"><path d="M2 6h8.5" stroke="#4aa98c" stroke-width="2.8"/><path d="M7.5 1.2l5.5 4.8-5.5 4.8z" fill="#4aa98c"/><path d="M15.5 11V3.5h5.5M15.5 20v8.3h5.5" fill="none" stroke="#7a7a7a" stroke-width="1.1"/><rect x="11.5" y="11.5" width="8.5" height="8.5" fill="#fff" stroke="#7a7a7a" stroke-width="1.1"/><path d="M15.75 13.3v5M13.2 15.8h5.1" stroke="#7a7a7a" stroke-width="1"/><g fill="#fff" stroke="#7a7a7a" stroke-width="1.1"><rect x="22.5" y="3.5" width="9.5" height="5"/><rect x="22.5" y="8.5" width="9.5" height="5"/><rect x="22.5" y="13.5" width="9.5" height="5"/><rect x="22.5" y="18.5" width="9.5" height="5"/><rect x="22.5" y="23.5" width="9.5" height="5"/></g><path d="M25 6h4.5M25 11h4.5M25 16h4.5M25 21h4.5M25 26h4.5" stroke="#1f7cc4" stroke-width="1.1"/></svg>
<div class="t" style="left:546.0px;width:100px;text-align:center;top:193px;font-size:11.7px;color:#262626;">Группировать</div>
<svg class="a" style="left:592px;top:211px" width="8" height="6" viewBox="0 0 8 6"><path d="M0.5 1h7L4 5z" fill="#666"/></svg>
<div class="a" style="left:552px;top:187px;width:86px;height:32px;border:3px solid #ff0000;border-radius:6px"></div>
<svg class="a" style="left:668px;top:156px" width="36" height="32" viewBox="0 0 36 32"><path d="M4.5 6h9" stroke="#4aa98c" stroke-width="2.8"/><path d="M7.5 1.2L2 6l5.5 4.8z" fill="#4aa98c"/><path d="M16.5 11V3.5h5.5M16.5 20v8.3h5.5" fill="none" stroke="#7a7a7a" stroke-width="1.1"/><rect x="12.5" y="11.5" width="8.5" height="8.5" fill="#fff" stroke="#f05a3c" stroke-width="1.1"/><path d="M13 19.5l7.5-7.5" stroke="#f05a3c" stroke-width="1.1"/><g fill="#fff" stroke="#7a7a7a" stroke-width="1.1"><rect x="23.5" y="3.5" width="9.5" height="5"/><rect x="23.5" y="8.5" width="9.5" height="5"/><rect x="23.5" y="13.5" width="9.5" height="5"/><rect x="23.5" y="18.5" width="9.5" height="5"/><rect x="23.5" y="23.5" width="9.5" height="5"/></g><path d="M26 6h4.5M26 11h4.5M26 16h4.5M26 21h4.5M26 26h4.5" stroke="#1f7cc4" stroke-width="1.1"/></svg>
<div class="t" style="left:631.0px;width:110px;text-align:center;top:193px;font-size:11.7px;color:#262626;">Разгруппировать</div>
<svg class="a" style="left:682px;top:211px" width="8" height="6" viewBox="0 0 8 6"><path d="M0.5 1h7L4 5z" fill="#666"/></svg>
<svg class="a" style="left:769px;top:156px" width="34" height="32" viewBox="0 0 34 32"><path d="M8.5 8V3.5h5" fill="none" stroke="#7a7a7a" stroke-width="1.1"/><rect x="2.5" y="9.5" width="8" height="8" fill="#fff" stroke="#7a7a7a" stroke-width="1.1"/><path d="M6.5 11v5M4 13.5h5" stroke="#7a7a7a"/><rect x="2.5" y="19.5" width="8" height="8" fill="#fff" stroke="#7a7a7a" stroke-width="1.1"/><path d="M6.5 21v5M4 23.5h5" stroke="#7a7a7a"/><g fill="#fff" stroke="#7a7a7a" stroke-width="1.1"><rect x="13.5" y="2.5" width="9" height="5"/><rect x="13.5" y="7.5" width="9" height="5"/><rect x="13.5" y="12.5" width="9" height="5"/><rect x="13.5" y="17.5" width="9" height="5"/><rect x="13.5" y="22.5" width="9" height="5"/><rect x="22.5" y="2.5" width="9" height="5"/><rect x="22.5" y="7.5" width="9" height="5"/><rect x="22.5" y="12.5" width="9" height="5"/><rect x="22.5" y="17.5" width="9" height="5"/><rect x="22.5" y="22.5" width="9" height="5"/></g><path d="M16 5h4M16 15h4M16 20h4" stroke="#1f7cc4" stroke-width="1.3"/><path d="M16 10h4M25 10h4M16 25h4M25 25h4" stroke="#f08a3a" stroke-width="1.3"/></svg>
<div class="t" style="left:730.0px;width:110px;text-align:center;top:193px;font-size:11.7px;color:#262626;">Промежуточный</div>
<div class="t" style="left:705.0px;width:160px;text-align:center;top:209px;font-size:11.7px;color:#262626;">итог</div>
<svg class="a" style="left:838px;top:156px" width="18" height="15" viewBox="0 0 18 15"><path d="M4 1v6M1 4h6" stroke="#b0b0b0" stroke-width="1.4"/><path d="M9 2h7M11 5h5M11 8h5M11 11h5M9 14h7" stroke="#c0c0c0" stroke-width="1"/><path d="M10 2v12" stroke="#c0c0c0"/></svg>
<div class="t" style="left:858px;top:159px;font-size:11.7px;color:#a6a6a6;">Отобразить детали</div>
<svg class="a" style="left:838px;top:179px" width="18" height="15" viewBox="0 0 18 15"><path d="M1 4h6" stroke="#b0b0b0" stroke-width="1.4"/><path d="M9 2h7M11 5h5M11 8h5M11 11h5M9 14h7" stroke="#c0c0c0" stroke-width="1"/><path d="M10 2v12" stroke="#c0c0c0"/></svg>
<div class="t" style="left:858px;top:182px;font-size:11.7px;color:#a6a6a6;">Скрыть детали</div>
<div class="t" style="left:728px;top:228px;font-size:11.7px;color:#262626;">Структура</div>
<svg class="a" style="left:963px;top:229px" width="11" height="11" viewBox="0 0 11 11"><path d="M2 7.8V1.5H9" fill="none" stroke="#444" stroke-width="1"/><path d="M3.8 3.3L9 8.5M5 8.5h4v-4" fill="none" stroke="#444" stroke-width="1"/></svg>
<div class="a" style="left:555px;top:222px;width:159px;height:51px;background:#fff;border:1px solid #c6c6c6;box-shadow:2px 2px 3px rgba(0,0,0,0.15)"></div>
<div class="a" style="left:558px;top:228px;width:153px;height:17px;background:#c6c6c6"></div>
<svg class="a" style="left:559px;top:228px" width="20" height="15" viewBox="0 0 20 15"><path d="M6.5 3.5V1.5h2.5M6.5 11v2.5h2.5" fill="none" stroke="#7a7a7a"/><rect x="2.5" y="4.5" width="5.5" height="5.5" fill="#fff" stroke="#7a7a7a"/><path d="M5.2 5.8v3M3.7 7.3h3" stroke="#7a7a7a" stroke-width="0.9"/><g fill="#fff" stroke="#7a7a7a"><rect x="10.5" y="1.5" width="7" height="4"/><rect x="10.5" y="5.5" width="7" height="4"/><rect x="10.5" y="9.5" width="7" height="4"/></g><path d="M12 3.5h4M12 7.5h4M12 11.5h4" stroke="#1f7cc4"/></svg>
<div class="t" style="left:589px;top:230px;font-size:11.7px;color:#262626;"><u style="text-decoration-thickness:1px;text-underline-offset:2px">Г</u>руппировать...</div>
<div class="t" style="left:589px;top:254px;font-size:11.7px;color:#6a6a6a;"><u style="text-decoration-thickness:1px;text-underline-offset:2px">С</u>оздать структуру</div>
<div class="a" style="left:555px;top:225px;width:159px;height:23px;border:3px solid #ff0000;border-radius:6px"></div>
</body></html>
